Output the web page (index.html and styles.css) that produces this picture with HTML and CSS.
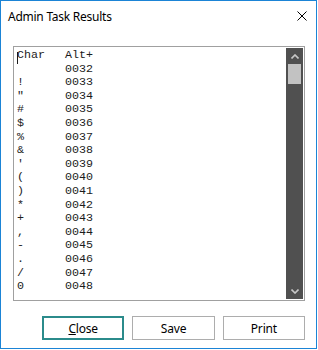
FILE: index.html
```html
<!DOCTYPE html>
<html lang="en">
<head>
    <meta charset="UTF-8">
    <meta name="viewport" content="width=device-width, initial-scale=1.0">
    <title>Admin Task Results</title>
    <link rel="stylesheet" href="styles.css">
</head>
<body>
    <div class="window">
        <div class="titlebar">
            <span class="title">Admin Task Results</span>
            <svg class="close-x" width="10" height="10" viewBox="0 0 10 10">
                <path d="M0.5 0.5 L9.5 9.5 M9.5 0.5 L0.5 9.5" stroke="#000" stroke-width="1" fill="none"/>
            </svg>
        </div>
        <div class="content">
            <div class="textbox">
                <div class="text"><span class="caret"></span><pre>Char	Alt+
 	0032
!	0033
"	0034
#	0035
$	0036
%	0037
&amp;	0038
'	0039
(	0040
)	0041
*	0042
+	0043
,	0044
-	0045
.	0046
/	0047
0	0048</pre></div>
                <div class="scrollbar">
                    <div class="arrow">
                        <svg width="8" height="5" viewBox="0 0 8 5"><polyline points="0.5,4.5 4,1 7.5,4.5" stroke="#c8c8c8" stroke-width="1.6" fill="none"/></svg>
                    </div>
                    <div class="track">
                        <div class="thumb"></div>
                    </div>
                    <div class="arrow">
                        <svg width="8" height="5" viewBox="0 0 8 5"><polyline points="0.5,0.5 4,4 7.5,0.5" stroke="#c8c8c8" stroke-width="1.6" fill="none"/></svg>
                    </div>
                </div>
            </div>
            <div class="buttons">
                <button class="default"><u>C</u>lose</button>
                <button>Save</button>
                <button>Print</button>
            </div>
        </div>
    </div>
</body>
</html>
```

FILE: styles.css
```css
body {
    margin: 0;
    background: #fff;
    font-family: "Noto Sans", "Open Sans", sans-serif;
}
.window {
    width: 317px;
    height: 349px;
    box-sizing: border-box;
    border: 1px solid #1b84d6;
    background: #fff;
    display: flex;
    flex-direction: column;
}
.titlebar {
    height: 30px;
    display: flex;
    align-items: center;
    justify-content: space-between;
    padding: 0 9px 0 7px;
}
.title {
    font-size: 12px;
    letter-spacing: -0.25px;
    color: #000;
}
.close-x {
    display: block;
}
.content {
    padding: 15px 11px 0 12px;
}
.textbox {
    height: 255px;
    box-sizing: border-box;
    border: 1px solid #a0a0a0;
    padding: 1px;
    display: flex;
}
.text {
    flex: 1;
    position: relative;
    padding: 1px 0 0 2px;
    overflow: hidden;
}
.text pre {
    margin: 0;
    font-family: "Liberation Mono", monospace;
    font-size: 11.67px;
    line-height: 13.6px;
    tab-size: 48px;
    color: #1c1c1c;
}
.caret {
    position: absolute;
    left: 2px;
    top: 4px;
    width: 1px;
    height: 12px;
    background: #1a1a1a;
}
.scrollbar {
    width: 17px;
    background: #505050;
    display: flex;
    flex-direction: column;
}
.arrow {
    height: 16px;
    display: flex;
    align-items: center;
    justify-content: center;
}
.arrow svg {
    display: block;
}
.track {
    flex: 1;
    padding: 0 2px;
}
.thumb {
    height: 20px;
    background: #c2c2c2;
}
.buttons {
    display: flex;
    gap: 8px;
    padding-left: 29px;
    margin-top: 15px;
}
.buttons button {
    width: 85px;
    height: 24px;
    box-sizing: border-box;
    border: 1px solid #adadad;
    background: #fff;
    font-family: "Noto Sans", "Open Sans", sans-serif;
    font-size: 12px;
    letter-spacing: -0.2px;
    color: #000;
    padding: 0;
}
.buttons button.default {
    border: 2px solid #2b8b8b;
}
```
